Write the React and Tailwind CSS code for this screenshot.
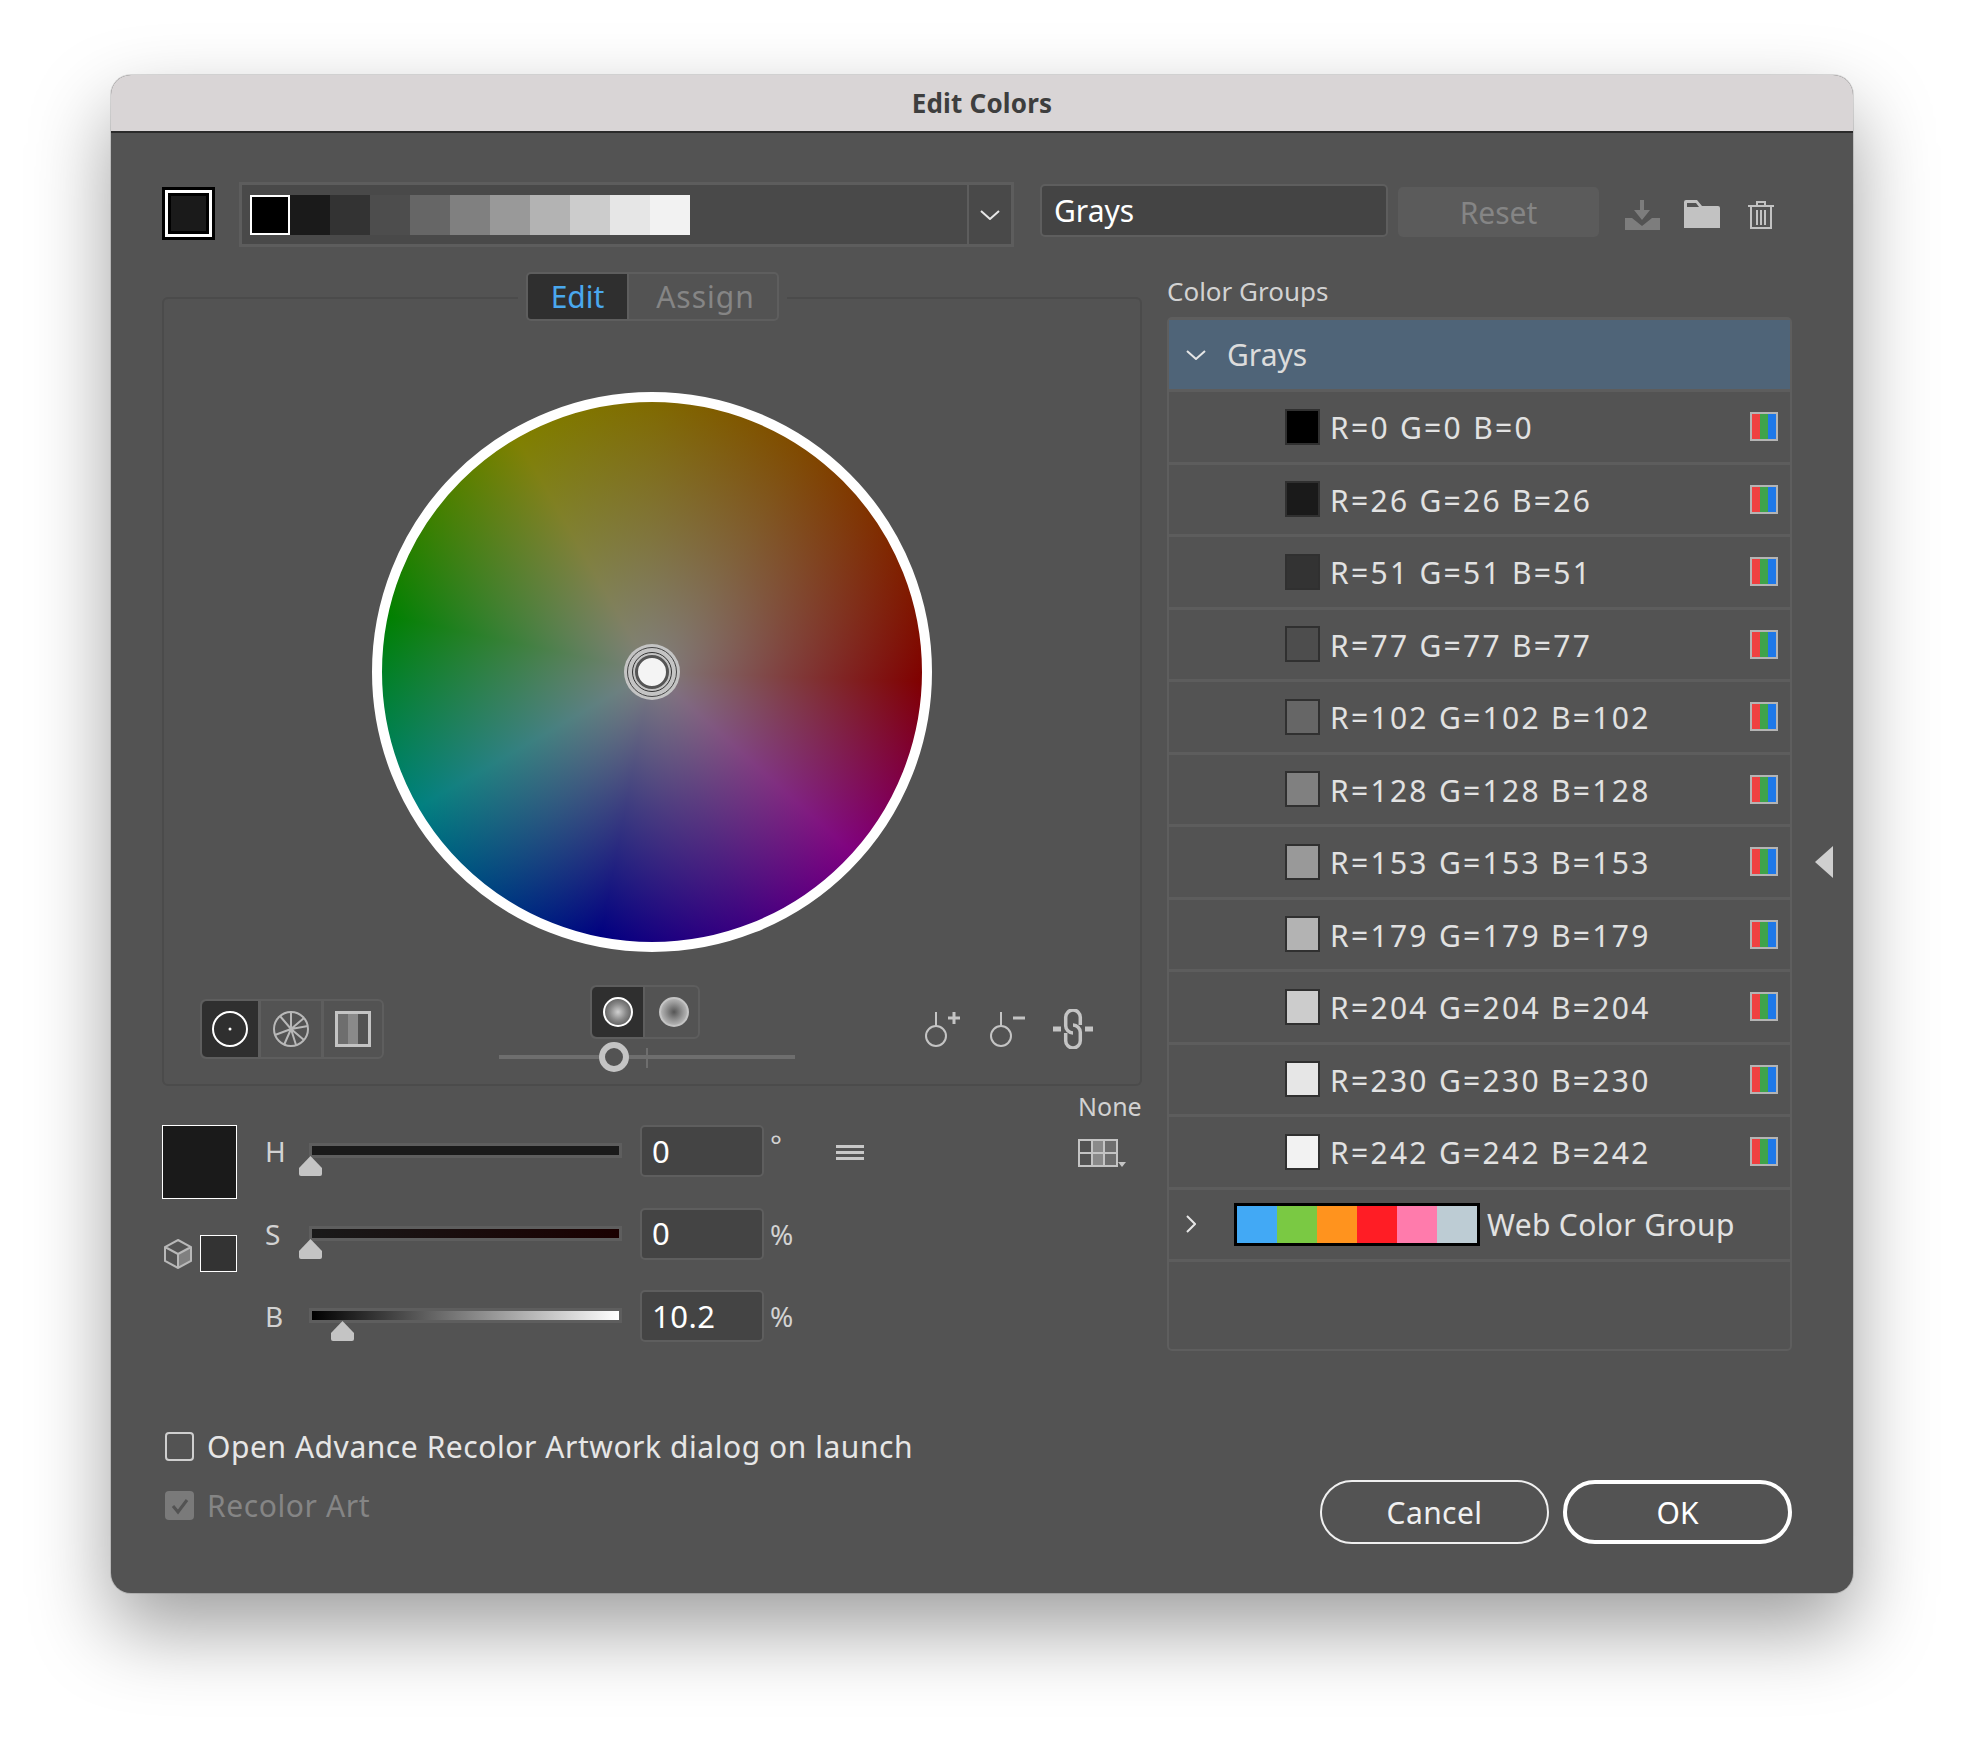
const rows = [
  { label: 'R=0 G=0 B=0', color: '#000000' },
  { label: 'R=26 G=26 B=26', color: '#1a1a1a' },
  { label: 'R=51 G=51 B=51', color: '#333333' },
  { label: 'R=77 G=77 B=77', color: '#4d4d4d' },
  { label: 'R=102 G=102 B=102', color: '#666666' },
  { label: 'R=128 G=128 B=128', color: '#808080' },
  { label: 'R=153 G=153 B=153', color: '#999999' },
  { label: 'R=179 G=179 B=179', color: '#b3b3b3' },
  { label: 'R=204 G=204 B=204', color: '#cccccc' },
  { label: 'R=230 G=230 B=230', color: '#e6e6e6' },
  { label: 'R=242 G=242 B=242', color: '#f2f2f2' },
];

const barColors = ['#1a1a1a', '#333333', '#4d4d4d', '#666666', '#808080', '#999999', '#b3b3b3', '#cccccc', '#e6e6e6', '#f2f2f2'];
const webColors = ['#42a9f5', '#7ac943', '#ff931e', '#ff1d25', '#ff7bac', '#bdccd4'];

const Chevron = ({ className }) => (
  <svg viewBox="0 0 20 10" className={className} fill="none" stroke="#e6e6e6" strokeWidth="2">
    <path d="M1 1l9 8 9-8" />
  </svg>
);

const HsbRow = ({ label, value, unit, track, left, menu }) => (
  <div className="flex h-[52px] items-start">
    <div className="flex h-[52px] w-[44px] items-center text-[28px] text-[#d2d2d2]">{label}</div>
    <div className="relative mt-[18px] h-[15px] w-[313px] border-[3px] border-[#5e5e5e]">
      <div className={`h-full w-full ${track}`} />
      <svg viewBox="0 0 23 20" className={`absolute top-[10px] h-[20px] w-[23px] ${left}`}>
        <path d="M11.5 0L23 12v6a2 2 0 0 1-2 2H2a2 2 0 0 1-2-2v-6z" fill="#c4c4c4" />
      </svg>
    </div>
    <div className="ml-[18px] flex h-[52px] w-[124px] items-center rounded-[5px] border-[2px] border-[#5e5e5e] bg-[#444444] pl-[10px] text-[31px] tracking-[0.5px] text-white">
      {value}
    </div>
    <div className="ml-[6px] flex h-[52px] w-[66px] items-center text-[28px] text-[#d2d2d2]">
      {unit === '°' ? <span className="-mt-[14px]">{unit}</span> : unit}
    </div>
    {menu && (
      <div className="mt-[20px] flex h-[15px] w-[28px] flex-col justify-between">
        <div className="h-[3px] bg-[#c8c8c8]" />
        <div className="h-[3px] bg-[#c8c8c8]" />
        <div className="h-[3px] bg-[#c8c8c8]" />
      </div>
    )}
  </div>
);

const ColorRow = ({ label, color }) => (
  <div className="flex h-[72.5px] items-center border-b-[3px] border-[#5d5d5d] pl-[116px] pr-[12px]">
    <div className="h-[36px] w-[35px] border-[2px] border-[#303030]" style={{ backgroundColor: color }} />
    <span className="ml-[10px] mt-[2px] flex-1 text-[30px] tracking-[2.3px] text-[#e2e2e2]">{label}</span>
    <div className="flex h-[29px] w-[28px] border-[2px] border-[#b4b4b4]">
      <div className="flex-1 bg-[#ef4040]" />
      <div className="flex-1 bg-[#3fa34a]" />
      <div className="flex-1 bg-[#1e78e8]" />
    </div>
  </div>
);

export default function App() {
  return (
    <div className="h-[1742px] w-[1964px] overflow-hidden bg-white pl-[111px] pt-[75px] [font-family:'Noto_Sans',sans-serif]">
      <div className="flex h-[1518px] w-[1742px] flex-col overflow-hidden rounded-[20px] bg-[#535353] shadow-[0_0_0_1px_rgba(0,0,0,0.12),0_36px_80px_rgba(0,0,0,0.38)]">
        <div className="flex h-[58px] shrink-0 items-center justify-center border-b-[2px] border-[#2a2a2a] bg-[#d9d5d6] text-[26px] font-bold tracking-[0.2px] text-[#3e3e3e]">
          Edit Colors
        </div>

        <div className="relative flex-1 px-[51px]">
          {/* top bar */}
          <div className="mt-[49px] flex h-[65px] items-start">
            <div className="mt-[5px] h-[53px] w-[53px] border-[3px] border-black bg-white p-[3px]">
              <div className="h-full w-full border-[3px] border-black bg-[#1a1a1a]" />
            </div>
            <div className="ml-[24px] flex h-[65px] w-[775px] border-[3px] border-[#5d5d5d] bg-[#494949]">
              <div className="flex flex-1 items-center pl-[8px]">
                <div className="h-[40px] w-[40px] border-[2px] border-white bg-black" />
                {barColors.map((color) => (
                  <div key={color} className="h-[40px] w-[40px]" style={{ backgroundColor: color }} />
                ))}
              </div>
              <div className="flex w-[44px] items-center justify-center border-l-[2px] border-[#5d5d5d]">
                <Chevron className="h-[10px] w-[20px]" />
              </div>
            </div>
            <div className="ml-[26px] mt-[2px] flex h-[53px] w-[348px] items-center rounded-[5px] border-[2px] border-[#5e5e5e] bg-[#444444] pl-[12px] text-[30px] text-white">
              Grays
            </div>
            <div className="ml-[10px] mt-[5px] flex h-[50px] w-[201px] items-center justify-center rounded-[5px] bg-[#5b5b5b] text-[30px] text-[#858585]">
              Reset
            </div>
            <svg viewBox="0 0 35 30" className="ml-[26px] mt-[18px] h-[30px] w-[35px]">
              <path d="M15 0h4v10h6l-8 10-8-10h6z" fill="#7d7d7d" />
              <path d="M0 18h7l10 8 10-8h8v12H0z" fill="#7d7d7d" />
            </svg>
            <svg viewBox="0 0 36 28" className="ml-[24px] mt-[18px] h-[28px] w-[36px]">
              <path d="M0 2a2 2 0 0 1 2-2h11l5 6h16a2 2 0 0 1 2 2v20H0z" fill="#c2c2c2" />
              <path d="M3 3h9l3 4H3z" fill="#535353" />
            </svg>
            <svg viewBox="0 0 28 30" className="ml-[27px] mt-[18px] h-[30px] w-[28px]" fill="none" stroke="#c2c2c2" strokeWidth="2">
              <path d="M1 6h26M10 6V2h8v4M4 6v22h20V6M10 10v15M14 10v15M18 10v15" />
            </svg>
          </div>

          <div className="flex gap-[25px]">
            {/* left column */}
            <div className="w-[980px]">
              <div className="relative mt-[50px] h-[789px] rounded-[6px] border-[2px] border-[#4b4b4b]">
                <div className="absolute left-[354px] top-[-27px] flex h-[49px] bg-[#535353] px-[8px]">
                  <div className="flex h-[49px] w-[103px] items-center justify-center rounded-l-[5px] border-[2px] border-[#5e5e5e] bg-[#2f2f2f] text-[30px] text-[#4aa8ee]">
                    Edit
                  </div>
                  <div className="flex h-[49px] w-[150px] items-center justify-center rounded-r-[5px] border-[2px] border-l-0 border-[#5e5e5e] pl-[5px] text-[30px] tracking-[1px] text-[#858585]">
                    Assign
                  </div>
                </div>

                <div className="flex justify-center pt-[93px]">
                  <div className="relative flex h-[560px] w-[560px] items-center justify-center rounded-full border-[10px] border-white bg-[radial-gradient(circle_closest-side,rgba(128,128,128,1)_0%,rgba(128,128,128,0.85)_14%,rgba(128,128,128,0.48)_50%,rgba(128,128,128,0)_100%),conic-gradient(from_0deg,#806a00,#804800_35deg,#803000_55deg,#800000_92deg,#800080_132deg,#3c0080_160deg,#000080_191deg,#004080_215deg,#008080_240deg,#008000_282deg,#808000_330deg,#806a00)]">
                    <div className="flex h-[56px] w-[56px] items-center justify-center rounded-full bg-[#c4c4c4]">
                      <div className="flex h-[50px] w-[50px] items-center justify-center rounded-full border-[1.5px] border-[#444444]">
                        <div className="flex h-[40px] w-[40px] items-center justify-center rounded-full border-[1px] border-[#333333]">
                          <div className="h-[34px] w-[34px] rounded-full border-[3px] border-[#555555] bg-[#f4f4f4]" />
                        </div>
                      </div>
                    </div>
                  </div>
                </div>

                {/* tools */}
                <div className="relative mt-[26px] h-[80px]">
                  <div className="absolute left-[36px] top-[21px] flex h-[60px] w-[184px] rounded-[6px] border-[2px] border-[#5e5e5e]">
                    <div className="flex w-[56px] items-center justify-center rounded-l-[5px] bg-[#2f2f2f]">
                      <svg viewBox="0 0 36 36" className="h-[36px] w-[36px]" fill="none" stroke="#fff" strokeWidth="2">
                        <circle cx="18" cy="18" r="17" />
                        <circle cx="18" cy="18" r="1.5" fill="#fff" stroke="none" />
                      </svg>
                    </div>
                    <div className="flex w-[66px] items-center justify-center border-x-[3px] border-[#5e5e5e]">
                      <svg viewBox="0 0 36 36" className="h-[36px] w-[36px]" fill="none" stroke="#b8b8b8" strokeWidth="2">
                        <circle cx="18" cy="18" r="17" />
                        <path d="M18 18L18 1M18 18L31 7M18 18L35 15M18 18L31 29M18 18L23 34M18 18L11 34M18 18L2 24M18 18L7 5" />
                      </svg>
                    </div>
                    <div className="flex flex-1 items-center justify-center">
                      <div className="flex h-[36px] w-[36px] border-[3px] border-[#c4c4c4]">
                        <div className="flex-1 bg-[#6e6e6e]" />
                        <div className="flex-1 bg-[#8a8a8a]" />
                        <div className="flex-1 bg-[#535353]" />
                      </div>
                    </div>
                  </div>

                  <div className="absolute left-[426px] top-[7px] flex h-[54px] w-[110px] rounded-[6px] border-[2px] border-[#5e5e5e]">
                    <div className="flex w-[51px] items-center justify-center rounded-l-[5px] bg-[#2f2f2f]">
                      <div className="h-[30px] w-[30px] rounded-full border-[2px] border-white bg-[radial-gradient(circle,#d0d0d0_0%,#888888_45%,#444444_100%)]" />
                    </div>
                    <div className="flex flex-1 items-center justify-center border-l-[2px] border-[#5e5e5e] pl-[4px]">
                      <div className="h-[30px] w-[30px] rounded-full border-[2px] border-[#c4c4c4] bg-[radial-gradient(circle,#555555_0%,#999999_50%,#d8d8d8_100%)]" />
                    </div>
                  </div>

                  <div className="absolute left-[335px] top-[77px] h-[4px] w-[296px] bg-[#6e6e6e]" />
                  <div className="absolute left-[482px] top-[70px] h-[20px] w-[2px] bg-[#6e6e6e]" />
                  <div className="absolute left-[435px] top-[64px] h-[30px] w-[30px] rounded-full border-[6px] border-[#c4c4c4] bg-[#535353]" />

                  <svg viewBox="0 0 36 36" className="absolute left-[761px] top-[33px] h-[36px] w-[36px]" fill="none" stroke="#c4c4c4" strokeWidth="2">
                    <circle cx="11" cy="25" r="10" />
                    <path d="M11 15V1" />
                    <path d="M23 7h12M29 1v12" strokeWidth="3" />
                  </svg>
                  <svg viewBox="0 0 36 36" className="absolute left-[826px] top-[33px] h-[36px] w-[36px]" fill="none" stroke="#c4c4c4" strokeWidth="2">
                    <circle cx="11" cy="25" r="10" />
                    <path d="M11 15V1" />
                    <path d="M23 7h12" strokeWidth="3" />
                  </svg>
                  <svg viewBox="0 0 40 40" className="absolute left-[889px] top-[31px] h-[40px] w-[40px]" fill="none" stroke="#c4c4c4" strokeWidth="3.5">
                    <path d="M20 24a7.3 7.3 0 0 1-7.3-7.3V8.3a7.3 7.3 0 0 1 14.6 0V16" />
                    <path d="M20 16a7.3 7.3 0 0 1 7.3 7.3v8.4a7.3 7.3 0 0 1-14.6 0V24" />
                    <path d="M0 20h8M32 20h8" strokeWidth="5" />
                  </svg>
                </div>
              </div>

              {/* hsb */}
              <div className="flex justify-between">
                <div className="mt-[39px] flex">
                  <div className="w-[103px]">
                    <div className="h-[74px] w-[75px] border-[1px] border-white bg-[#1a1a1a]" />
                    <div className="mt-[36px] flex w-[75px] items-center justify-between">
                      <svg viewBox="0 0 28 30" className="ml-[2px] h-[30px] w-[28px]" fill="none" stroke="#b8b8b8" strokeWidth="2">
                        <path d="M14 15l13-7v14l-13 7z" fill="#808080" stroke="none" />
                        <path d="M14 1l13 7v14l-13 7-13-7V8zM1 8l13 7 13-7M14 15v14" />
                      </svg>
                      <div className="h-[37px] w-[37px] border-[1px] border-white bg-[#333333]" />
                    </div>
                  </div>
                  <div className="flex flex-col gap-[30.5px]">
                    <HsbRow label="H" value="0" unit="°" track="bg-[#1a1a1a]" left="left-[-13px]" menu />
                    <HsbRow label="S" value="0" unit="%" track="bg-[linear-gradient(to_right,#1a1a1a,#1a0000)]" left="left-[-13px]" />
                    <HsbRow label="B" value="10.2" unit="%" track="bg-[linear-gradient(to_right,#000000,#ffffff)]" left="left-[19px]" />
                  </div>
                </div>
                <div className="mt-[5px] flex w-[64px] flex-col">
                  <span className="h-[36px] text-[25px] leading-[30px] text-[#d2d2d2]">None</span>
                  <div className="relative mt-[12px] grid h-[28px] w-[40px] grid-cols-3 grid-rows-2 gap-[2px] border-[2px] border-[#c4c4c4] bg-[#c4c4c4]">
                    <div className="bg-[#535353]" />
                    <div className="bg-[#8a8a8a]" />
                    <div className="bg-[#6e6e6e]" />
                    <div className="bg-[#535353]" />
                    <div className="bg-[#8a8a8a]" />
                    <div className="bg-[#6e6e6e]" />
                    <div className="absolute bottom-[-2px] right-[-10px] h-0 w-0 border-x-[4px] border-t-[5px] border-x-transparent border-t-[#c4c4c4]" />
                  </div>
                </div>
              </div>

              {/* checks */}
              <div className="mt-[82px] flex items-center">
                <div className="ml-[3px] h-[29px] w-[29px] rounded-[4px] border-[2px] border-[#cfcfcf]" />
                <span className="ml-[13px] text-[30px] tracking-[0.55px] text-[#e6e6e6]">Open Advance Recolor Artwork dialog on launch</span>
              </div>
              <div className="mt-[14px] flex items-center">
                <div className="ml-[3px] flex h-[29px] w-[29px] items-center justify-center rounded-[4px] bg-[#7a7a7a]">
                  <svg viewBox="0 0 20 20" className="h-[20px] w-[20px]" fill="none" stroke="#535353" strokeWidth="3">
                    <path d="M3 10l5 6 9-12" />
                  </svg>
                </div>
                <span className="ml-[13px] text-[30px] tracking-[0.6px] text-[#858585]">Recolor Art</span>
              </div>
            </div>

            {/* right column */}
            <div className="w-[625px]">
              <div className="mt-[24px] h-[46px] text-[26px] leading-[40px] text-[#d2d2d2]">Color Groups</div>
              <div className="h-[1034px] rounded-[5px] border-[2px] border-t-[3px] border-[#5e5e5e]">
                <div className="flex h-[72px] items-center border-b-[3px] border-[#5d5d5d] bg-[#4f6478] pl-[17px]">
                  <Chevron className="h-[10px] w-[20px]" />
                  <span className="ml-[21px] text-[30px] text-[#dcdcdc]">Grays</span>
                </div>
                {rows.map((row) => (
                  <ColorRow key={row.label} {...row} />
                ))}
                <div className="flex h-[72.5px] items-center border-b-[3px] border-[#5d5d5d] pl-[17px]">
                  <svg viewBox="0 0 10 18" className="h-[18px] w-[10px]" fill="none" stroke="#e6e6e6" strokeWidth="2">
                    <path d="M1 1l8 8-8 8" />
                  </svg>
                  <div className="ml-[38px] flex h-[43px] w-[246px] border-[3px] border-black">
                    {webColors.map((color) => (
                      <div key={color} className="flex-1" style={{ backgroundColor: color }} />
                    ))}
                  </div>
                  <span className="ml-[7px] text-[30px] tracking-[0.35px] text-[#e2e2e2]">Web Color Group</span>
                </div>
              </div>
              <div className="mt-[129px] flex justify-end gap-[14px]">
                <button className="h-[64px] w-[229px] rounded-full border-[2px] border-[#f0f0f0] text-[30px] tracking-[0.4px] text-[#f0f0f0]">Cancel</button>
                <button className="h-[64px] w-[229px] rounded-full border-[4px] border-white text-[30px] text-white">OK</button>
              </div>
            </div>
          </div>

          {/* collapse arrow */}
          <div className="absolute left-[1704px] top-[713px] h-0 w-0 border-y-[16px] border-r-[18px] border-y-transparent border-r-[#cfcfcf]" />
        </div>
      </div>
    </div>
  );
}
